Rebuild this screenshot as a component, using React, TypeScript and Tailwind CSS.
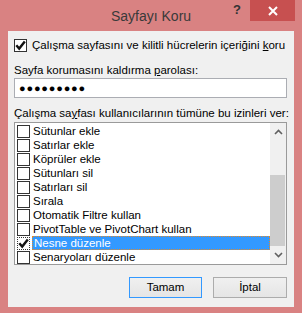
import React from "react";

const font = { fontFamily: '"Liberation Sans", Arial, sans-serif' };

const items = [
  "Sütunlar ekle",
  "Satırlar ekle",
  "Köprüler ekle",
  "Sütunları sil",
  "Satırları sil",
  "Sırala",
  "Otomatik Filtre kullan",
  "PivotTable ve PivotChart kullan",
  "Nesne düzenle",
  "Senaryoları düzenle",
];

function Check() {
  return (
    <svg width="11" height="11" viewBox="0 0 11 11" className="block">
      <path d="M1.3 5.3 L4.2 8.6 L9.8 1.4" fill="none" stroke="#111" strokeWidth="2.4" />
    </svg>
  );
}

function Box({ checked, focused }: { checked?: boolean; focused?: boolean }) {
  return (
    <div
      className={`flex h-[13px] w-[13px] shrink-0 items-center justify-center bg-white ${
        focused ? "border border-dotted border-[#333]" : "border border-[#333]"
      }`}
    >
      {checked && <Check />}
    </div>
  );
}

export default function App() {
  return (
    <div className="flex h-[313px] w-[302px] flex-col whitespace-nowrap bg-[#d98282] text-[11.5px] text-black" style={font}>
      <div className="relative h-[31px] shrink-0">
        <div className="pt-[6px] text-center text-[14px] leading-[20px] text-[#3a3a3a]">Sayfayı Koru</div>
        <div className="absolute left-[233px] top-[2px] text-[13px] font-bold leading-[16px] text-[#333]">?</div>
        <div className="absolute left-[250px] top-0 flex h-[21px] w-[45px] items-center justify-center bg-[#c75050]">
          <svg width="10" height="10" viewBox="0 0 10 10">
            <path d="M1 1 L9 9 M9 1 L1 9" stroke="#fff" strokeWidth="2" />
          </svg>
        </div>
      </div>

      <div className="mx-[8px] flex h-[276px] flex-col bg-[#f0f0f0] pl-[6px] pr-[7px]">
        <div className="mt-[8px] flex h-[13px] items-center gap-[5px]">
          <Box checked />
          <span className="leading-[15px]">
            Çalışma sayfasını ve kilitli hücrelerin içeriğini <u>k</u>oru
          </span>
        </div>

        <div className="mt-[11px] h-[15px] leading-[15px]">
          Sayfa korumasını kaldırma <u>p</u>arolası:
        </div>
        <div className="flex h-[20px] items-center border border-[#abadb3] bg-white pl-[4px] text-[11px] tracking-[0.8px]">
          ●●●●●●●●●
        </div>

        <div className="mt-[8px] h-[15px] leading-[15px]">
          Çalışma sa<u>y</u>fası kullanıcılarının tümüne bu izinleri ver:
        </div>
        <div className="mt-[1px] flex h-[143px] border border-[#9a9a9a] bg-white">
          <div className="flex flex-1 flex-col pl-[2px] pt-[1px]">
            {items.map((label, i) => {
              const sel = i === 8;
              return (
                <div key={label} className="flex h-[14px] items-center gap-[2px]">
                  <Box checked={sel} focused={sel} />
                  <span
                    className={`flex h-[14px] flex-1 items-center pl-[1px] leading-[14px] ${
                      sel ? "border border-dotted border-[#e08a2c] bg-[#3399ff] text-white" : ""
                    }`}
                  >
                    {label}
                  </span>
                </div>
              );
            })}
          </div>
          <div className="flex w-[16px] flex-col bg-[#f0f0f0]">
            <div className="flex h-[20px] items-center justify-center">
              <svg width="9" height="6" viewBox="0 0 9 6">
                <path d="M1 5 L4.5 1.5 L8 5" fill="none" stroke="#606060" strokeWidth="1.6" />
              </svg>
            </div>
            <div className="flex-1 pt-[33px] pb-[1px]">
              <div className="h-[71px] w-[15px] bg-[#cdcdcd]" />
            </div>
            <div className="flex h-[18px] items-center justify-center">
              <svg width="9" height="6" viewBox="0 0 9 6">
                <path d="M1 1 L4.5 4.5 L8 1" fill="none" stroke="#606060" strokeWidth="1.6" />
              </svg>
            </div>
          </div>
        </div>

        <div className="mt-[12px] flex justify-end gap-[11px]">
          <button className="flex h-[21px] w-[73px] items-center justify-center border border-[#3399ff] bg-gradient-to-b from-[#f0f0f0] to-[#e5e5e5] leading-[15px]">
            Tamam
          </button>
          <button className="flex h-[21px] w-[74px] items-center justify-center border border-[#acacac] bg-gradient-to-b from-[#f0f0f0] to-[#e5e5e5] leading-[15px]">
            İptal
          </button>
        </div>
      </div>
    </div>
  );
}
